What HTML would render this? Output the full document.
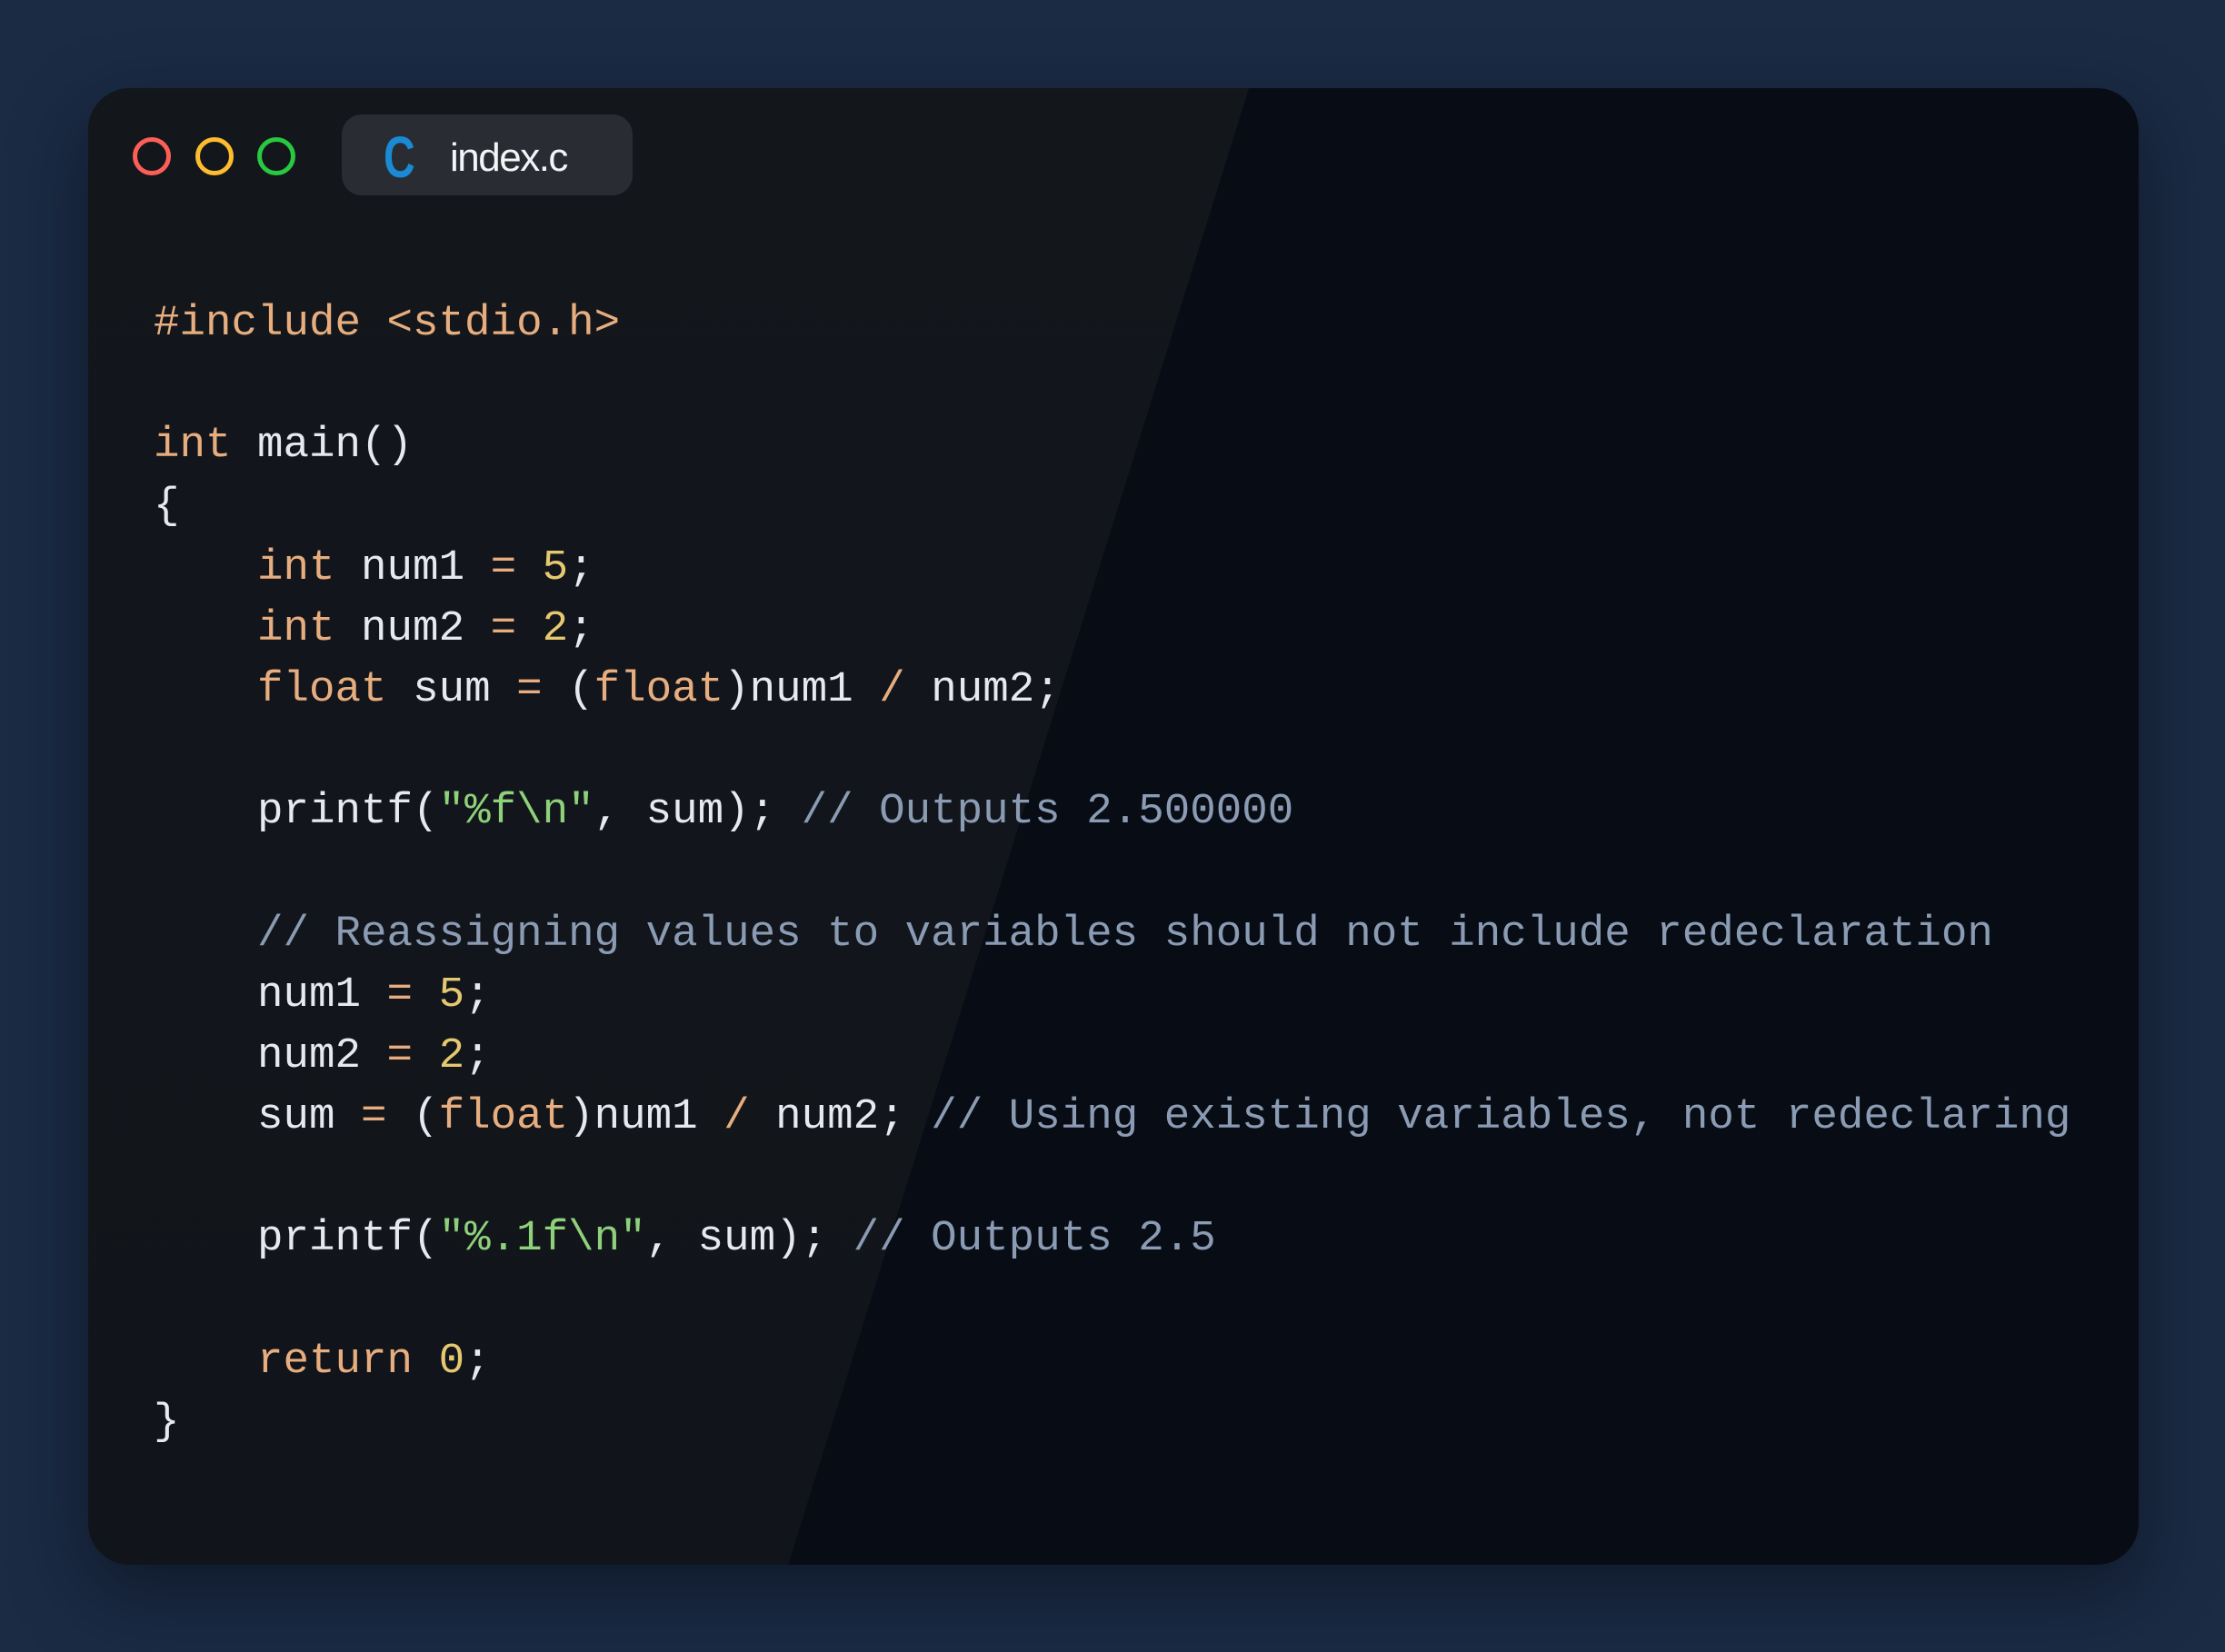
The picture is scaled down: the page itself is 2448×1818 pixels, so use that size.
<!DOCTYPE html>
<html><head><meta charset="utf-8"><style>
html,body{margin:0;padding:0;}
body{width:2448px;height:1818px;background:#1b2b44;position:relative;overflow:hidden;font-family:"Liberation Sans",sans-serif;}
.win{position:absolute;left:97px;top:97px;width:2256px;height:1625px;border-radius:46px;overflow:hidden;background:#080d15;
box-shadow:0 30px 80px rgba(8,14,26,0.6);}
.win:before{content:"";position:absolute;left:0;top:0;width:100%;height:100%;background:linear-gradient(180deg,#13171c,#11151b);
clip-path:polygon(0 0,1277px 0,770px 100%,0 100%);}
.dot{position:absolute;top:151px;width:42px;height:42px;border-radius:50%;border:5px solid;box-sizing:border-box;}
.tab{position:absolute;left:376px;top:126px;width:320px;height:89px;border-radius:22px;background:#292d33;}
.tab .c{position:absolute;left:46px;top:10px;font:bold 64px "Liberation Sans",sans-serif;color:#1a8ad4;transform:scaleX(0.75);transform-origin:left;}
.tab .n{position:absolute;left:119px;top:23px;font-size:44px;color:#f2f4f6;letter-spacing:-1.5px;}
pre{position:absolute;left:169px;top:323px;margin:0;font-family:"Liberation Mono",monospace;font-size:47.5px;line-height:67.15px;color:#e6eaf0;}
.k{color:#e8ad7e}.y{color:#e5c870}.s{color:#8fd07a}.m{color:#8a9bb3}
</style></head><body>
<div class="win"></div>
<div class="dot" style="left:146px;border-color:#fd5f57"></div>
<div class="dot" style="left:215px;border-color:#febc2e"></div>
<div class="dot" style="left:283px;border-color:#28c840"></div>
<div class="tab"><span class="c">C</span><span class="n">index.c</span></div>
<pre><span class="k">#include &lt;stdio.h&gt;</span>

<span class="k">int</span> main()
{
    <span class="k">int</span> num1 <span class="k">=</span> <span class="y">5</span>;
    <span class="k">int</span> num2 <span class="k">=</span> <span class="y">2</span>;
    <span class="k">float</span> sum <span class="k">=</span> (<span class="k">float</span>)num1 <span class="k">/</span> num2;

    printf(<span class="s">"%f\n"</span>, sum); <span class="m">// Outputs 2.500000</span>

    <span class="m">// Reassigning values to variables should not include redeclaration</span>
    num1 <span class="k">=</span> <span class="y">5</span>;
    num2 <span class="k">=</span> <span class="y">2</span>;
    sum <span class="k">=</span> (<span class="k">float</span>)num1 <span class="k">/</span> num2; <span class="m">// Using existing variables, not redeclaring</span>

    printf(<span class="s">"%.1f\n"</span>, sum); <span class="m">// Outputs 2.5</span>

    <span class="k">return</span> <span class="y">0</span>;
}</pre>
</body></html>
